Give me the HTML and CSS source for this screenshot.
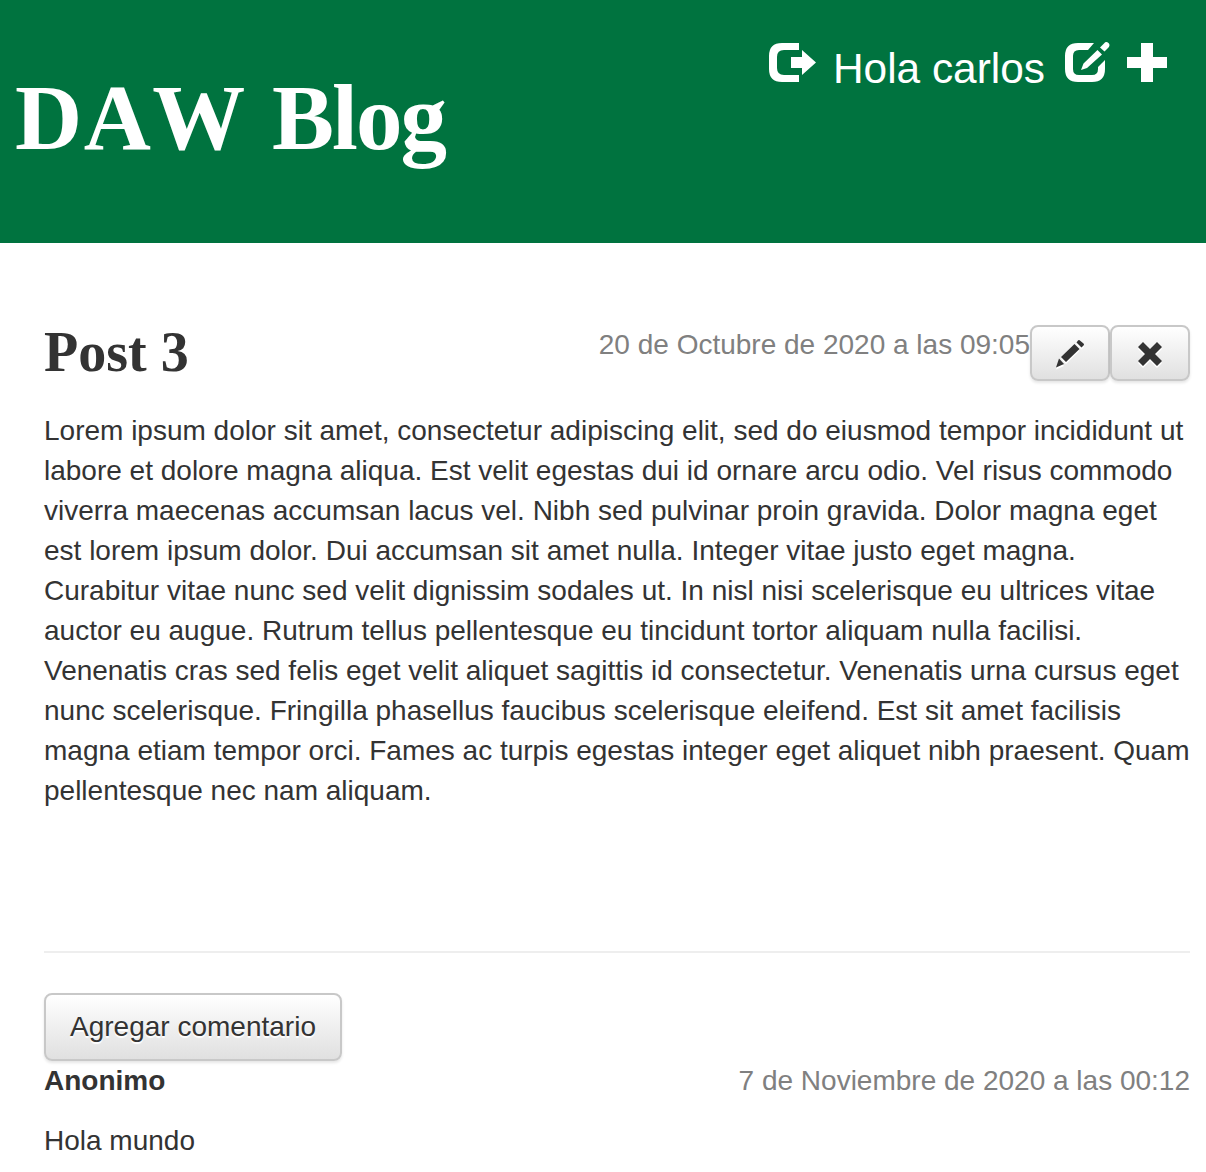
FILE: index.html
```html
<!DOCTYPE html>
<html lang="es">
<head>
<meta charset="utf-8">
<title>DAW Blog</title>
<link rel="stylesheet" href="styles.css">
</head>
<body>
<header class="page-header">
  <h1 class="brand"><span class="brand-acronym">DAW</span> Blog</h1>
  <nav class="user-nav">
    <svg class="icon-logout" width="48" height="40" viewBox="0 0 48 40" fill="#fff"><path d="M30 0H13Q0 0 0 13V26Q0 39 13 39H30V32H15Q8 32 8 25V14Q8 7 15 7H30ZM22 14H33V7L47 19.500L33 32V25H22Z"/></svg>
    <span class="greeting">Hola carlos</span>
    <svg class="icon-edit" width="46" height="41" viewBox="0 0 46 41" fill="#fff"><path d="M29 1H13Q0 1 0 14V27Q0 40 13 40H27Q40 40 40 27V18L33 25V27Q33 33 27 33H14Q8 33 8 27V14Q8 8 14 8H23ZM32.500 8L37 12.500L22 26L16 28L18.500 21.500ZM35 5.500L39 1.500Q41-1 43.500 1Q45.500 3 43.500 5.500L39.500 9.500Z"/></svg>
    <svg class="icon-plus" width="40" height="39" viewBox="0 0 40 39" fill="#fff"><path d="M14 0H26V14H40V25H26V39H14V25H0V14H14Z"/></svg>
  </nav>
</header>
<main class="content">
  <article class="post">
    <div class="post-heading">
      <h2 class="post-title">Post 3</h2>
      <div class="post-meta">
        <time class="date">20 de Octubre de 2020 a las 09:05</time>
        <button class="btn btn-icon" aria-label="Editar"><svg width="30" height="30" viewBox="0 0 30 30" fill="#333"><path d="M6 18L19.500 5L24.500 10L11 23ZM21.500 3.500L23 1.500Q24 .5 25.500 2L28.500 4.500Q29.500 5.500 28.500 6.500L26.500 8.500ZM4 19.500L9 25L1 28.500Z"/></svg></button>
        <button class="btn btn-icon" aria-label="Eliminar"><svg width="30" height="30" viewBox="0 0 30 30" fill="#333"><path d="M8 3L15 10L22 3L27 8L20 15L27 22L22 27L15 20L8 27L3 22L10 15L3 8Z"/></svg></button>
      </div>
    </div>
    <p class="post-body">Lorem ipsum dolor sit amet, consectetur adipiscing elit, sed do eiusmod tempor incididunt ut labore et dolore magna aliqua. Est velit egestas dui id ornare arcu odio. Vel risus commodo viverra maecenas accumsan lacus vel. Nibh sed pulvinar proin gravida. Dolor magna eget est lorem ipsum dolor. Dui accumsan sit amet nulla. Integer vitae justo eget magna. Curabitur vitae nunc sed velit dignissim sodales ut. In nisl nisi scelerisque eu ultrices vitae auctor eu augue. Rutrum tellus pellentesque eu tincidunt tortor aliquam nulla facilisi. Venenatis cras sed felis eget velit aliquet sagittis id consectetur. Venenatis urna cursus eget nunc scelerisque. Fringilla phasellus faucibus scelerisque eleifend. Est sit amet facilisis magna etiam tempor orci. Fames ac turpis egestas integer eget aliquet nibh praesent. Quam pellentesque nec nam aliquam.</p>
  </article>
  <hr class="divider">
  <button class="btn btn-text">Agregar comentario</button>
  <section class="comment">
    <div class="comment-heading"><strong>Anonimo</strong><time class="date">7 de Noviembre de 2020 a las 00:12</time></div>
    <p class="comment-body">Hola mundo</p>
  </section>
</main>
</body>
</html>
```
FILE: styles.css
```css
* { box-sizing: border-box; }
body {
  margin: 0;
  background: #fff;
  color: #333;
  font: 28px/40px "Liberation Sans", Arial, sans-serif;
}
h1, h2, p { margin: 0; }
svg { display: block; overflow: visible; }
.page-header {
  display: flex;
  justify-content: space-between;
  align-items: flex-start;
  height: 243px;
  padding: 0 39px 0 15px;
  background: #00733f;
  color: #fff;
}
.brand {
  padding-top: 78px;
  font: 700 93px/80px "Liberation Serif", serif;
  font-kerning: none;
  letter-spacing: -2px;
  word-spacing: 4px;
  white-space: nowrap;
}
.brand-acronym { letter-spacing: 1.5px; }
.user-nav { display: flex; align-items: flex-start; padding-top: 42px; }
.icon-logout { margin: 1px 16px 0 0; }
.greeting { padding-top: 7px; font-size: 42.4px; line-height: 40px; white-space: nowrap; }
.icon-edit { margin-left: 20px; }
.icon-plus { margin: 1px 0 0 16px; }
.content { padding: 82px 16px 0 44px; }
.post-heading { display: flex; justify-content: space-between; height: 86px; }
.post-title {
  padding-top: 7px;
  font: 700 56px/40px "Liberation Serif", serif;
}
.post-meta { display: flex; align-items: flex-start; }
.date { color: #808080; }
.btn {
  display: flex;
  align-items: center;
  justify-content: center;
  padding: 0;
  border: 2px solid #c8c8c8;
  border-radius: 8px;
  background: linear-gradient(#fff, #e0e0e0);
  box-shadow: 0 2px 3px rgba(0, 0, 0, .1);
  color: #333;
  font: inherit;
  text-shadow: 0 2px 1px #fff;
}
.btn-icon { width: 80px; height: 56px; }
.btn-icon svg { margin-top: 2px; filter: drop-shadow(0 2px 0 #fff); }
.btn-text { width: 298px; height: 68px; }
.divider { height: 2px; margin: 140px 0 40px; border: 0; background: #eee; }
.comment-heading { display: flex; justify-content: space-between; }
.comment-body { margin-top: 20px; }
```
